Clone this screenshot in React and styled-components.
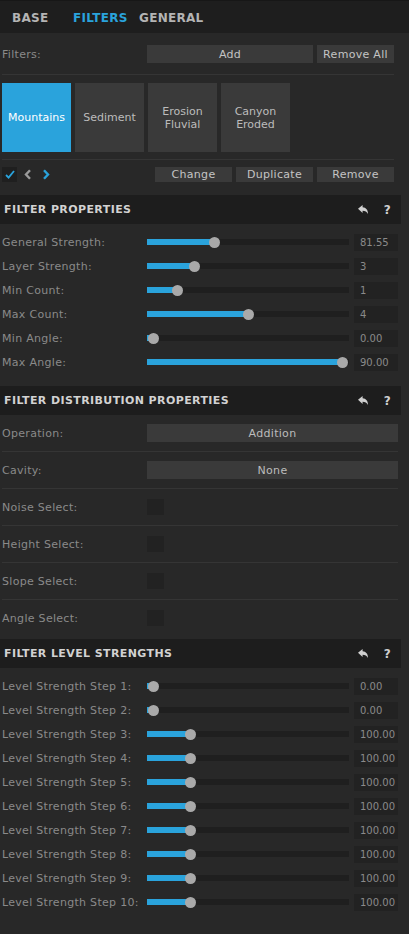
import React from 'react'
import styled, { createGlobalStyle } from 'styled-components'

const GlobalStyle = createGlobalStyle`
  html, body {
    margin: 0;
    padding: 0;
    background: #282828;
  }
  body {
    font-family: "DejaVu Sans", Verdana, sans-serif;
  }
`

const BLUE = '#2aa3dc'

const Page = styled.div`
  width: 409px;
  min-height: 934px;
  background: #282828;
  overflow: hidden;
`

const TabBar = styled.div`
  display: flex;
  align-items: center;
  height: 33px;
  padding-top: 1px;
  box-sizing: border-box;
  background: #1e1e1e;
  border-top: 1px solid #171717;
`

const Tab = styled.div`
  width: ${p => (p.$w ? `${p.$w}px` : 'auto')};
  padding-left: 12px;
  box-sizing: border-box;
  font-size: 12px;
  font-weight: bold;
  letter-spacing: 0.3px;
  color: ${p => (p.$active ? BLUE : '#b4b4b4')};
`

const TopArea = styled.div`
  padding: 12px 15px 0 2px;
`

const Row = styled.div`
  display: flex;
  align-items: center;
  gap: 4px;
  height: ${p => p.$h || 18}px;
`

const Label = styled.div`
  font-size: 11px;
  letter-spacing: 0.3px;
  color: #8a8a8a;
  width: ${p => (p.$w ? `${p.$w}px` : 'auto')};
  flex-shrink: 0;
  white-space: nowrap;
`

const Button = styled.div`
  display: flex;
  align-items: center;
  justify-content: center;
  height: 100%;
  width: ${p => p.$w}px;
  margin-left: ${p => (p.$push ? 'auto' : '0')};
  background: #3a3a3a;
  color: #c4c4c4;
  font-size: 11px;
  letter-spacing: 0.3px;
`

const Divider = styled.div`
  height: 1px;
  background: #353535;
  margin-top: ${p => p.$mt}px;
`

const Tiles = styled.div`
  display: flex;
  gap: 4px;
  margin-top: 8px;
`

const Tile = styled.div`
  width: 69px;
  height: 69px;
  display: flex;
  align-items: center;
  justify-content: center;
  text-align: center;
  font-size: 11px;
  line-height: 13px;
  background: ${p => (p.$active ? BLUE : '#3a3a3a')};
  color: ${p => (p.$active ? '#ffffff' : '#bcbcbc')};
`

const ActionRow = styled(Row)`
  margin-top: 7px;
  height: 15px;
`

const CheckBox = styled.div`
  width: 15px;
  height: 15px;
  background: #1f1f1f;
  display: flex;
  align-items: center;
  justify-content: center;
`

const NavIcon = styled.div`
  width: 14px;
  display: flex;
  justify-content: center;
`

const Header = styled.div`
  display: flex;
  align-items: center;
  width: 401px;
  height: 29px;
  background: #1d1d1d;
  margin-top: ${p => p.$mt}px;
  padding-left: 4px;
  box-sizing: border-box;
  font-size: 11px;
  font-weight: bold;
  letter-spacing: 0.4px;
  color: #d2d2d2;
`

const HeaderTools = styled.div`
  display: flex;
  align-items: center;
  margin-left: auto;
  margin-right: 10px;
  gap: 16px;
  color: #cfcfcf;
  font-size: 12px;
  font-weight: bold;
`

const Body = styled.div`
  padding: ${p => p.$pt || 0}px 11px 0 2px;
`

const SliderRow = styled.div`
  display: flex;
  align-items: center;
  height: 24px;
`

const Track = styled.div`
  position: relative;
  width: 202px;
  height: 6px;
  background: #1f1f1f;
`

const Fill = styled.div`
  height: 100%;
  background: ${BLUE};
`

const Thumb = styled.div`
  position: absolute;
  top: 50%;
  width: 11px;
  height: 11px;
  margin: -5.5px 0 0 -5.5px;
  border-radius: 50%;
  background: #a9a9a9;
`

const Value = styled.div`
  width: 44px;
  height: 17px;
  margin-left: 5px;
  padding-left: 6px;
  box-sizing: border-box;
  display: flex;
  align-items: center;
  background: #222222;
  color: #8a8a8a;
  font-size: 10px;
`

const DistRow = styled.div`
  display: flex;
  align-items: center;
  height: 36px;
  border-bottom: ${p => (p.$last ? 'none' : '1px solid #353535')};
`

const Select = styled.div`
  flex: 1;
  height: 18px;
  display: flex;
  align-items: center;
  justify-content: center;
  background: #3a3a3a;
  color: #bcbcbc;
  font-size: 11px;
  letter-spacing: 0.3px;
`

const Toggle = styled.div`
  width: 17px;
  height: 16px;
  background: #222222;
`

const UndoIcon = () => (
  <svg width="10" height="9" viewBox="0 0 10 9">
    <path d="M0 3.8 L4.6 0 V2.2 C8 2.4 10 4.8 10 9 C8.8 6.7 7 5.8 4.6 5.8 V8 Z" fill="#cfcfcf" />
  </svg>
)

const Check = () => (
  <svg width="10" height="9" viewBox="0 0 10 9">
    <path d="M1 5 L3.6 7.6 L9 1" stroke={BLUE} strokeWidth="1.8" fill="none" />
  </svg>
)

const Chevron = ({ dir, color }) => (
  <svg width="8" height="11" viewBox="0 0 8 11">
    <path
      d={dir === 'left' ? 'M6 1.2 L2 5.5 L6 9.8' : 'M2 1.2 L6 5.5 L2 9.8'}
      stroke={color}
      strokeWidth="2.4"
      fill="none"
    />
  </svg>
)

const SectionHeader = ({ title, mt }) => (
  <Header $mt={mt}>
    {title}
    <HeaderTools>
      <UndoIcon />
      <span>?</span>
    </HeaderTools>
  </Header>
)

const Slider = ({ label, p, value }) => {
  const center = 6 + p * 189
  return (
    <SliderRow>
      <Label $w={145}>{label}</Label>
      <Track>
        <Fill style={{ width: center }} />
        <Thumb style={{ left: center }} />
      </Track>
      <Value>{value}</Value>
    </SliderRow>
  )
}

const filterProps = [
  ['General Strength:', 0.328, '81.55'],
  ['Layer Strength:', 0.222, '3'],
  ['Min Count:', 0.127, '1'],
  ['Max Count:', 0.503, '4'],
  ['Min Angle:', 0.005, '0.00'],
  ['Max Angle:', 1, '90.00'],
]

const levels = Array.from({ length: 10 }, (_, i) =>
  i < 2 ? [`Level Strength Step ${i + 1}:`, 0.005, '0.00'] : [`Level Strength Step ${i + 1}:`, 0.2, '100.00']
)

const toggles = ['Noise Select:', 'Height Select:', 'Slope Select:', 'Angle Select:']

export default function App() {
  return (
    <Page>
      <GlobalStyle />
      <TabBar>
        <Tab $w={61}>BASE</Tab>
        <Tab $w={66} $active>FILTERS</Tab>
        <Tab>GENERAL</Tab>
      </TabBar>

      <TopArea>
        <Row>
          <Label>Filters:</Label>
          <Button $w={166} $push>Add</Button>
          <Button $w={77}>Remove All</Button>
        </Row>
        <Divider $mt={11} />
        <Tiles>
          <Tile $active>Mountains</Tile>
          <Tile>Sediment</Tile>
          <Tile>Erosion<br />Fluvial</Tile>
          <Tile>Canyon<br />Eroded</Tile>
        </Tiles>
        <Divider $mt={7} />
        <ActionRow>
          <CheckBox><Check /></CheckBox>
          <NavIcon><Chevron dir="left" color="#9a9a9a" /></NavIcon>
          <NavIcon><Chevron dir="right" color={BLUE} /></NavIcon>
          <Button $w={77} $push>Change</Button>
          <Button $w={77}>Duplicate</Button>
          <Button $w={77}>Remove</Button>
        </ActionRow>
      </TopArea>

      <SectionHeader title="FILTER PROPERTIES" mt={13} />
      <Body $pt={6}>
        {filterProps.map(([l, p, v]) => (
          <Slider key={l} label={l} p={p} value={v} />
        ))}
      </Body>

      <SectionHeader title="FILTER DISTRIBUTION PROPERTIES" mt={12} />
      <Body>
        <DistRow>
          <Label $w={145}>Operation:</Label>
          <Select>Addition</Select>
        </DistRow>
        <DistRow>
          <Label $w={145}>Cavity:</Label>
          <Select>None</Select>
        </DistRow>
        {toggles.map((t, i) => (
          <DistRow key={t} $last={i === toggles.length - 1}>
            <Label $w={145}>{t}</Label>
            <Toggle />
          </DistRow>
        ))}
      </Body>

      <SectionHeader title="FILTER LEVEL STRENGTHS" mt={3} />
      <Body $pt={6}>
        {levels.map(([l, p, v]) => (
          <Slider key={l} label={l} p={p} value={v} />
        ))}
      </Body>
    </Page>
  )
}
